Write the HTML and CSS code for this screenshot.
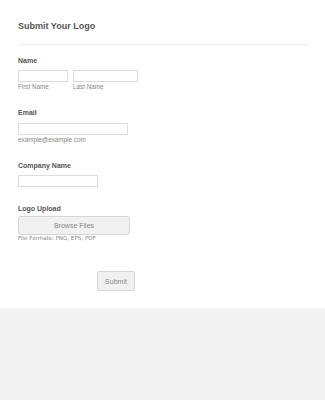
FILE: index.html
```html
<!DOCTYPE html>
<html>
<head>
<meta charset="utf-8">
<link rel="stylesheet" href="styles.css">
</head>
<body>
<div class="form">
  <h1 class="title">Submit Your Logo</h1>
  <div class="divider"></div>

  <div class="field field-name">
    <div class="label">Name</div>
    <div class="name-row">
      <div class="sub">
        <div class="input input-first"></div>
        <div class="sublabel">First Name</div>
      </div>
      <div class="sub">
        <div class="input input-last"></div>
        <div class="sublabel">Last Name</div>
      </div>
    </div>
  </div>

  <div class="field field-email">
    <div class="label">Email</div>
    <div class="input input-email"></div>
    <div class="sublabel">example@example.com</div>
  </div>

  <div class="field field-company">
    <div class="label">Company Name</div>
    <div class="input input-company"></div>
  </div>

  <div class="field field-upload">
    <div class="label label-upload">Logo Upload</div>
    <div class="browse">Browse Files</div>
    <div class="formats">File Formats: PNG, EPS, PDF</div>
  </div>

  <div class="actions">
    <div class="submit">Submit</div>
  </div>
</div>
<div class="footer"></div>
</body>
</html>
```
FILE: styles.css
```css
html, body {
  margin: 0;
  padding: 0;
  background: #f3f3f3;
}
body {
  font-family: "Liberation Sans", Arial, sans-serif;
  color: #555;
}
.form {
  background: #fff;
  padding: 21px 17px 17px 18px;
}
.title {
  margin: 0;
  font-size: 9px;
  line-height: 10px;
  font-weight: bold;
  color: #555;
}
.divider {
  margin-top: 13px;
  height: 1px;
  background: #eee;
}
.field {
  display: flex;
  flex-direction: column;
  align-items: flex-start;
}
.field-name { margin-top: 12px; }
.field-email { margin-top: 19px; }
.field-company { margin-top: 19px; }
.field-upload { margin-top: 18px; }
.label {
  font-size: 7px;
  line-height: 8px;
  font-weight: bold;
  color: #555;
  margin-bottom: 5px;
}
.label-upload {
  margin-bottom: 3px;
}
.name-row {
  display: flex;
  gap: 5px;
}
.input {
  box-sizing: border-box;
  height: 12px;
  border: 1px solid #dcdcdc;
  background: #fff;
}
.input-first { width: 50px; }
.input-last { width: 65px; }
.input-email { width: 110px; margin-top: 1px; }
.input-company { width: 80px; margin-top: 0; }
.sublabel {
  font-size: 6.3px;
  line-height: 7px;
  margin-top: 1px;
  color: #888;
}
.browse {
  box-sizing: border-box;
  width: 112px;
  height: 19px;
  border: 1px solid #d6d6d6;
  border-radius: 3px;
  background: #f1f1f1;
  color: #888;
  font-size: 7px;
  display: flex;
  align-items: center;
  justify-content: center;
}
.formats {
  font-family: "DejaVu Sans", Verdana, sans-serif;
  font-size: 5.6px;
  line-height: 7px;
  color: #888;
}
.actions {
  margin-top: 29px;
  padding-left: 79px;
  display: flex;
}
.submit {
  box-sizing: border-box;
  width: 38px;
  height: 20px;
  border: 1px solid #d6d6d6;
  border-radius: 2px;
  background: #f1f1f1;
  color: #888;
  font-size: 7px;
  display: flex;
  align-items: center;
  justify-content: center;
}
.footer {
  height: 93px;
}
```
